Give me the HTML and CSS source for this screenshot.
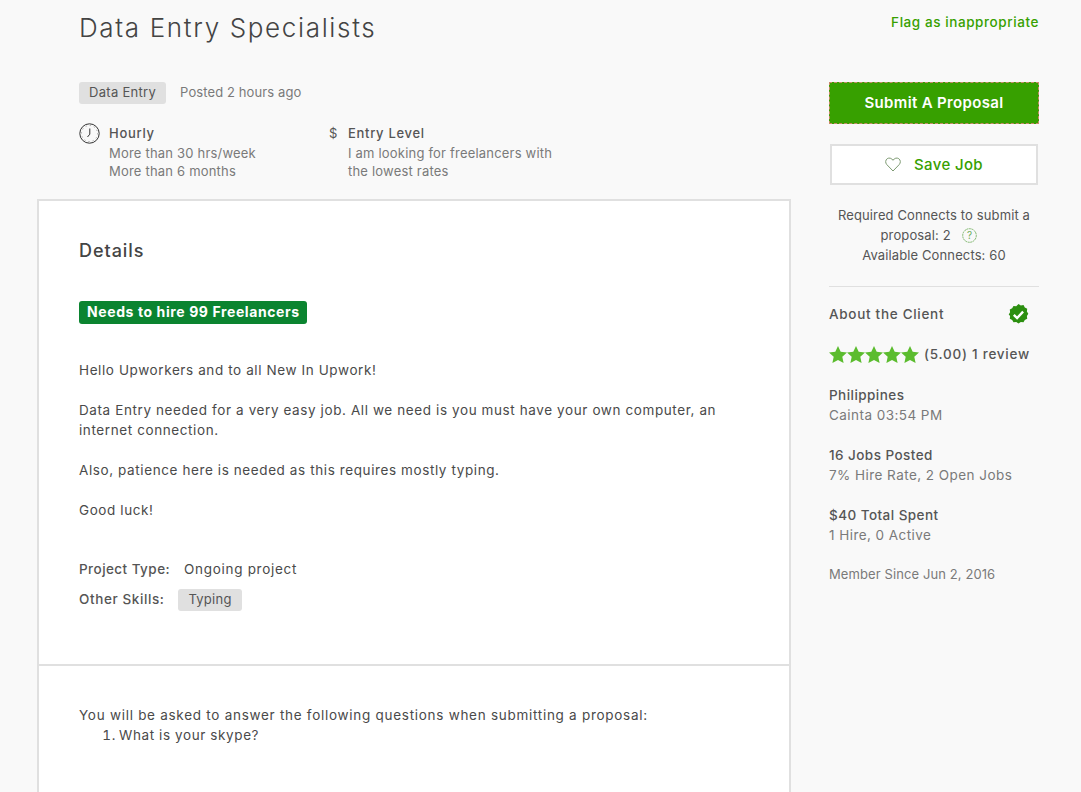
FILE: index.html
```html
<!DOCTYPE html>
<html lang="en">
<head>
<meta charset="utf-8">
<title>Data Entry Specialists</title>
<link rel="stylesheet" href="styles.css">
</head>
<body>
<div class="page">
  <main class="main">
    <header class="job-head">
      <h1 class="title">Data Entry Specialists</h1>
      <div class="meta-row">
        <span class="tag">Data Entry</span>
        <span class="posted">Posted 2 hours ago</span>
      </div>
      <div class="facts">
        <div class="fact fact-hours">
          <svg class="fact-icon" width="21" height="21" viewBox="0 0 21 21"><circle cx="10.5" cy="10.5" r="9.7" fill="none" stroke="#333" stroke-width="1"/><circle cx="10.5" cy="10.5" r="8" fill="none" stroke="#777" stroke-width="1" stroke-dasharray=".8 3.4"/><path d="M10.8 5.500v5.700L8.500 14" fill="none" stroke="#333" stroke-width="1"/></svg>
          <div>
            <div class="fact-title">Hourly</div>
            <div class="fact-sub">More than 30 hrs/week</div>
            <div class="fact-sub">More than 6 months</div>
          </div>
        </div>
        <div class="fact fact-level">
          <span class="dollar">$</span>
          <div>
            <div class="fact-title">Entry Level</div>
            <div class="fact-sub">I am looking for freelancers with</div>
            <div class="fact-sub">the lowest rates</div>
          </div>
        </div>
      </div>
    </header>
    <section class="card">
      <div class="card-part details">
        <h2 class="details-title">Details</h2>
        <div class="hire-badge">Needs to hire 99 Freelancers</div>
        <p class="para">Hello Upworkers and to all New In Upwork!</p>
        <p class="para">Data Entry needed for a very easy job. All we need is you must have your own computer, an<br>internet connection.</p>
        <p class="para">Also, patience here is needed as this requires mostly typing.</p>
        <p class="para">Good luck!</p>
        <div class="project-line"><b class="label">Project Type:</b><span>Ongoing project</span></div>
        <div class="skill-line"><b class="label">Other Skills:</b><span class="tag">Typing</span></div>
      </div>
      <div class="card-part questions">
        <p class="q-intro">You will be asked to answer the following questions when submitting a proposal:</p>
        <ol class="q-list"><li>What is your skype?</li></ol>
      </div>
    </section>
  </main>
  <aside class="side">
    <a class="flag" href="#">Flag as inappropriate</a>
    <a class="btn-submit" href="#">Submit A Proposal</a>
    <a class="btn-save" href="#">
      <svg width="16" height="15" viewBox="0 0 16 15"><path d="M8 14L1.800 7.600C.1 5.800.4 3 2.200 1.700 4 .5 6.600 1 8 3.300 9.400 1 12 .5 13.800 1.700 15.600 3 15.900 5.800 14.200 7.600Z" fill="none" stroke="#7d9a72" stroke-width="1"/></svg>
      <span>Save Job</span>
    </a>
    <div class="connects">
      Required Connects to submit a<br>
      <span class="proposal-line">proposal: 2
        <svg class="help" width="15" height="15" viewBox="0 0 15 15"><circle cx="7.500" cy="7.500" r="6.800" fill="none" stroke="#6fae5a" stroke-width=".9" stroke-dasharray="2 .6"/><text x="7.500" y="11" text-anchor="middle" class="help-q">?</text></svg>
      </span><br>
      Available Connects: 60
    </div>
    <div class="client">
      <div class="client-head">
        <span>About the Client</span>
        <svg width="21" height="21" viewBox="0 0 21 21"><path d="M10.500 0l2.300 1.400 2.700-.3 1.300 2.300 2.400 1.300-.3 2.700 1.400 2.300-1.400 2.300.3 2.700-2.400 1.300-1.300 2.300-2.700-.3-2.300 1.400-2.300-1.400-2.700.3-1.300-2.300-2.400-1.300.3-2.700L.7 10.500l1.400-2.300-.3-2.700 2.400-1.300 1.300-2.300 2.700.3z" fill="#2c8f10"/><path d="M5.800 10.800l3.300 3.200 6-6.300" fill="none" stroke="#fff" stroke-width="2.400"/></svg>
      </div>
      <div class="rating">
        <span class="stars">
          <svg width="18" height="17" viewBox="0 0 18 17"><path class="star" d="M9 0l2.700 5.800 6.300.7-4.700 4.300 1.300 6.200L9 13.900 3.400 17l1.300-6.200L0 6.500l6.300-.7z"/></svg>
          <svg width="18" height="17" viewBox="0 0 18 17"><path class="star" d="M9 0l2.700 5.800 6.300.7-4.700 4.300 1.300 6.200L9 13.900 3.400 17l1.300-6.200L0 6.500l6.300-.7z"/></svg>
          <svg width="18" height="17" viewBox="0 0 18 17"><path class="star" d="M9 0l2.700 5.800 6.300.7-4.700 4.300 1.300 6.200L9 13.900 3.400 17l1.300-6.200L0 6.500l6.300-.7z"/></svg>
          <svg width="18" height="17" viewBox="0 0 18 17"><path class="star" d="M9 0l2.700 5.800 6.300.7-4.700 4.300 1.300 6.200L9 13.900 3.400 17l1.300-6.200L0 6.500l6.300-.7z"/></svg>
          <svg width="18" height="17" viewBox="0 0 18 17"><path class="star" d="M9 0l2.700 5.800 6.300.7-4.700 4.300 1.300 6.200L9 13.900 3.400 17l1.300-6.200L0 6.500l6.300-.7z"/></svg>
        </span>
        <span>(5.00) 1 review</span>
      </div>
      <div class="stat"><div class="stat-main">Philippines</div><div class="stat-sub">Cainta 03:54 PM</div></div>
      <div class="stat"><div class="stat-main">16 Jobs Posted</div><div class="stat-sub">7% Hire Rate, 2 Open Jobs</div></div>
      <div class="stat"><div class="stat-main">$40 Total Spent</div><div class="stat-sub">1 Hire, 0 Active</div></div>
      <div class="member">Member Since Jun 2, 2016</div>
    </div>
  </aside>
</div>
</body>
</html>
```
FILE: styles.css
```css
* { box-sizing: border-box; }
html, body { margin: 0; height: 100%; }
body {
  background: #f9f9f9;
  color: #4a4a4a;
  font-family: "Inter", "Liberation Sans", sans-serif;
  font-size: 13px;
  line-height: 20px;
  letter-spacing: .15px;
  overflow: hidden;
}
.page { display: flex; padding-left: 37px; height: 792px; overflow: hidden; }
.main { width: 754px; flex: none; }
.side { width: 210px; margin-left: 38px; flex: none; }

.job-head { padding: 11px 0 0 42px; height: 199px; }
.title { margin: 0; font-size: 26px; line-height: 34px; font-weight: 300; letter-spacing: 1.65px; color: #444; }
.meta-row { display: flex; align-items: center; margin-top: 37px; }
.tag { display: inline-block; background: #e0e0e0; border-radius: 3px; padding: 0 10px 2px; color: #555; letter-spacing: .3px; }
.posted { margin-left: 14px; color: #7a7a7a; line-height: 18px; margin-bottom: 2px; letter-spacing: .1px; }
.facts { display: flex; margin-top: 19px; }
.fact { display: flex; }
.fact-hours { width: 250px; }
.fact-icon { margin-right: 9px; flex: none; }
.dollar { width: 19px; flex: none; color: #555; }
.fact-title { font-weight: 500; line-height: 21px; letter-spacing: .7px; color: #555; }
.fact-sub { color: #7a7a7a; line-height: 18px; letter-spacing: .2px; }

.card { background: #fff; border: 2px solid #e0e0e0; border-bottom: 0; height: 700px; }
.card-part { padding-left: 40px; padding-right: 39px; }
.details { height: 465px; border-bottom: 2px solid #e0e0e0; padding-top: 38px; font-size: 13.5px; letter-spacing: .6px; }
.details-title { margin: 0; font-size: 18px; line-height: 24px; font-weight: 500; color: #444; letter-spacing: .95px; }
.hire-badge { display: inline-block; margin-top: 38px; padding: 1px 7px 2px 8px; border-radius: 3px; background: #0b8430; color: #fff; font-size: 14px; font-weight: 700; letter-spacing: .6px; }
.para { margin: 0 0 20px; }
.hire-badge + .para { margin-top: 36px; }
.project-line { margin-top: 39px; display: flex; }
.project-line span { margin-left: 14px; letter-spacing: .7px; }
.project-line .label { letter-spacing: .45px; }
.label { font-weight: 500; color: #555; }
.skill-line { display: flex; align-items: center; margin-top: 10px; }
.skill-line .label { margin-bottom: 2px; }
.skill-line .tag { margin-left: 14px; font-size: 13px; letter-spacing: .25px; }
.questions { padding-top: 39px; font-size: 13.5px; letter-spacing: .6px; }
.q-intro { margin: 0; letter-spacing: .72px; }
.q-list { margin: 0; padding-left: 40px; }
.q-list li::marker { content: counter(list-item) ".\2009"; }

.flag { display: block; margin-top: 12px; text-align: right; color: #37a000; font-size: 13.5px; font-weight: 500; letter-spacing: .58px; text-decoration: none; }
.btn-submit { display: block; margin-top: 50px; height: 42px; line-height: 40px; background: #37a000; color: #fff; border: 1px dashed #c98a6a; text-align: center; font-size: 15px; font-weight: 600; letter-spacing: .35px; text-decoration: none; }
.btn-save { display: flex; align-items: center; justify-content: center; gap: 13px; margin: 20px 1px 0; height: 41px; background: #fff; border: 2px solid #e0e0e0; color: #37a000; font-size: 15px; font-weight: 500; letter-spacing: .35px; text-decoration: none; }
.connects { text-align: center; margin-top: 20px; padding-bottom: 21px; border-bottom: 1px solid #e0e0e0; color: #555; letter-spacing: .12px; }
.proposal-line svg { vertical-align: -3px; margin: 0 10px 0 8px; }
.help-q { font-size: 10px; fill: #6fae5a; }
.client { font-size: 13.5px; letter-spacing: .45px; }
.client-head { display: flex; justify-content: space-between; align-items: center; padding-right: 10px; margin-top: 15px; font-weight: 500; letter-spacing: .7px; color: #555; }
.client-head svg { margin-top: 2px; }
.rating { display: flex; align-items: center; gap: 5px; margin-top: 19px; font-weight: 500; letter-spacing: .75px; color: #555; }
.stars { display: flex; }
.star { fill: #5bbc2e; }
.stat { margin-top: 21px; }
.stat + .stat { margin-top: 20px; }
.stat-main { font-weight: 500; color: #555; }
.stat-sub { color: #7a7a7a; }
.member { margin-top: 19px; color: #7a7a7a; font-size: 13px; letter-spacing: .1px; }
```
